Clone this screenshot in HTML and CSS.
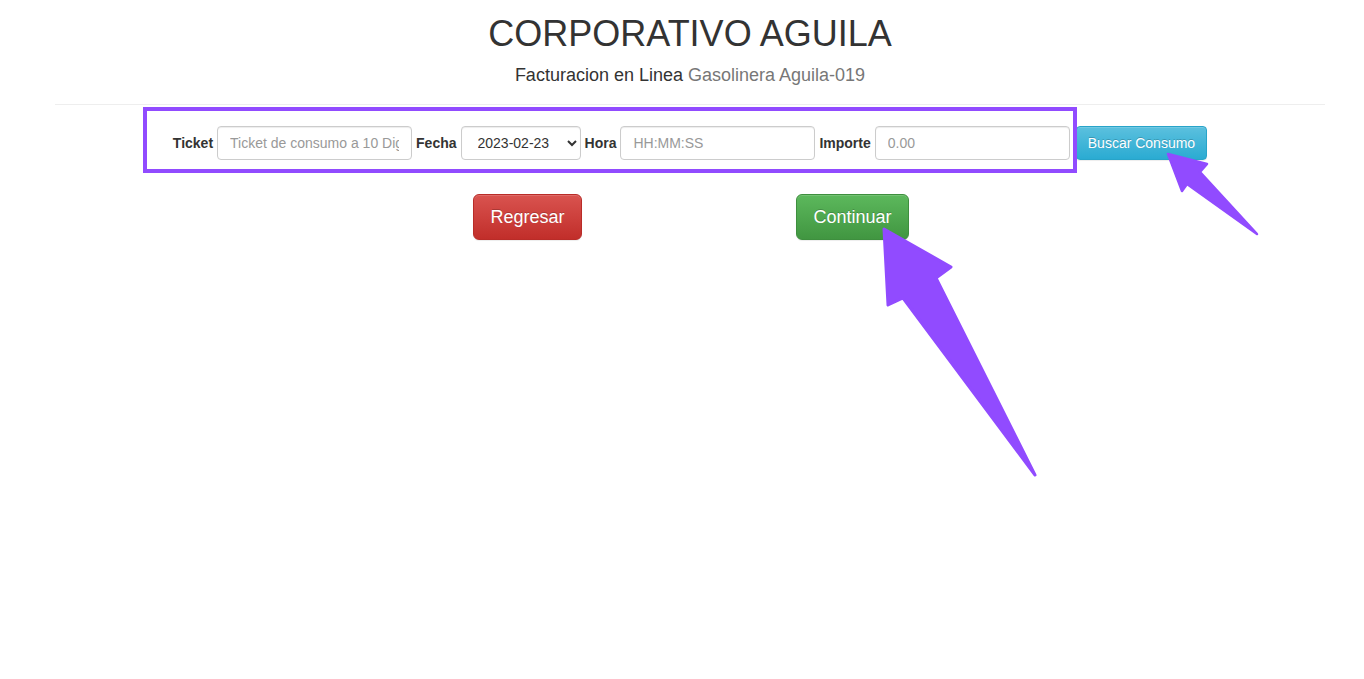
FILE: index.html
```html
<!DOCTYPE html>
<html lang="es">

<head>
    <meta charset="UTF-8">
    <meta name="viewport" content="width=device-width, initial-scale=1.0">
    <title>Facturacion en Linea</title>
    <link rel="stylesheet" href="styles.css">
</head>

<body>
    <div class="page">
        <div class="header">
            <h1>CORPORATIVO AGUILA</h1>
            <h4>Facturacion en Linea <span class="muted">Gasolinera Aguila-019</span></h4>
        </div>
        <hr>

        <form class="search" onsubmit="return false">
            <label for="ticket">Ticket</label>
            <input type="text" id="ticket" class="field" placeholder="Ticket de consumo a 10 Digitos">
            <label for="fecha">Fecha</label>
            <select id="fecha" class="field field-date">
                <option>2023-02-23</option>
                <option>2023-02-22</option>
                <option>2023-02-21</option>
            </select>
            <label for="hora">Hora</label>
            <input type="text" id="hora" class="field" placeholder="HH:MM:SS">
            <label for="importe">Importe</label>
            <input type="text" id="importe" class="field" placeholder="0.00">
            <button class="btn btn-info">Buscar Consumo</button>
        </form>

        <div class="actions">
            <div class="cell">
                <button class="btn btn-lg btn-danger">Regresar</button>
            </div>
            <div class="cell">
                <button class="btn btn-lg btn-success">Continuar</button>
            </div>
        </div>
    </div>

    <!-- marcas sobre la captura -->
    <svg class="marks" width="1364" height="679" viewBox="0 0 1364 679">
        <rect x="145" y="109" width="930" height="62" fill="none" stroke="#914bff" stroke-width="4" />
        <polygon points="1168,154 1207,164 1200,172 1257,234 1187,184 1182,191" fill="#914bff" stroke="#914bff"
            stroke-width="2.5" stroke-linejoin="round" />
        <polygon points="884,229 951,267 936,278 1035,475 903,298 888,305" fill="#914bff" stroke="#914bff"
            stroke-width="3" stroke-linejoin="round" />
    </svg>
</body>

</html>
```

FILE: styles.css
```css
body {
    margin: 0;
    min-height: 679px;
    font-family: "Liberation Sans", Arial, sans-serif;
    font-size: 14px;
    line-height: 20px;
    color: #333;
    background-color: #fff;
    position: relative;
}

.page {
    padding: 0 39px 0 55px;
}

.header {
    text-align: center;
}

h1 {
    margin: 14px 0 0;
    font-size: 36px;
    line-height: 40px;
    font-weight: normal;
}

h4 {
    margin: 11px 0 0;
    font-size: 18px;
    line-height: 20px;
    font-weight: normal;
}

.muted {
    color: #777;
}

hr {
    margin: 19px 0 0;
    border: 0;
    border-top: 1px solid #eee;
}

.search {
    display: flex;
    justify-content: center;
    align-items: center;
    gap: 4px;
    margin-top: 21px;
}

.search label {
    font-weight: bold;
}

.field {
    box-sizing: border-box;
    width: 195px;
    height: 34px;
    padding: 6px 12px;
    font-family: inherit;
    font-size: 14px;
    color: #555;
    background-color: #fff;
    border: 1px solid #ccc;
    border-radius: 4px;
    box-shadow: inset 0 1px 1px rgba(0, 0, 0, 0.075);
}

.field::placeholder {
    color: #999;
}

.field-date {
    width: 120px;
    padding: 6px 8px 6px 12px;
    color: #333;
}

.btn {
    box-sizing: border-box;
    padding: 6px 12px;
    font-family: inherit;
    font-size: 14px;
    line-height: 20px;
    color: #fff;
    border: 1px solid transparent;
    border-radius: 4px;
    cursor: pointer;
    text-shadow: 0 -1px 0 rgba(0, 0, 0, 0.2);
    box-shadow: inset 0 1px 0 rgba(255, 255, 255, 0.15), 0 1px 1px rgba(0, 0, 0, 0.075);
}

.btn-info {
    margin-left: 2px;
    height: 34px;
    padding: 6px 11px;
    background-image: linear-gradient(to bottom, #5bc0de 0, #2aabd2 100%);
    border-color: #28a4c9;
}

.btn-lg {
    padding: 10px 16px;
    font-size: 18px;
    line-height: 24px;
    border-radius: 6px;
}

.btn-danger {
    background-image: linear-gradient(to bottom, #d9534f 0, #c12e2a 100%);
    border-color: #b92c28;
}

.btn-success {
    background-image: linear-gradient(to bottom, #5cb85c 0, #419641 100%);
    border-color: #3e8f3e;
}

.actions {
    display: flex;
    justify-content: center;
    margin-top: 34px;
}

.cell {
    width: 325px;
    text-align: center;
}

.marks {
    position: absolute;
    top: 0;
    left: 0;
    pointer-events: none;
}
```
